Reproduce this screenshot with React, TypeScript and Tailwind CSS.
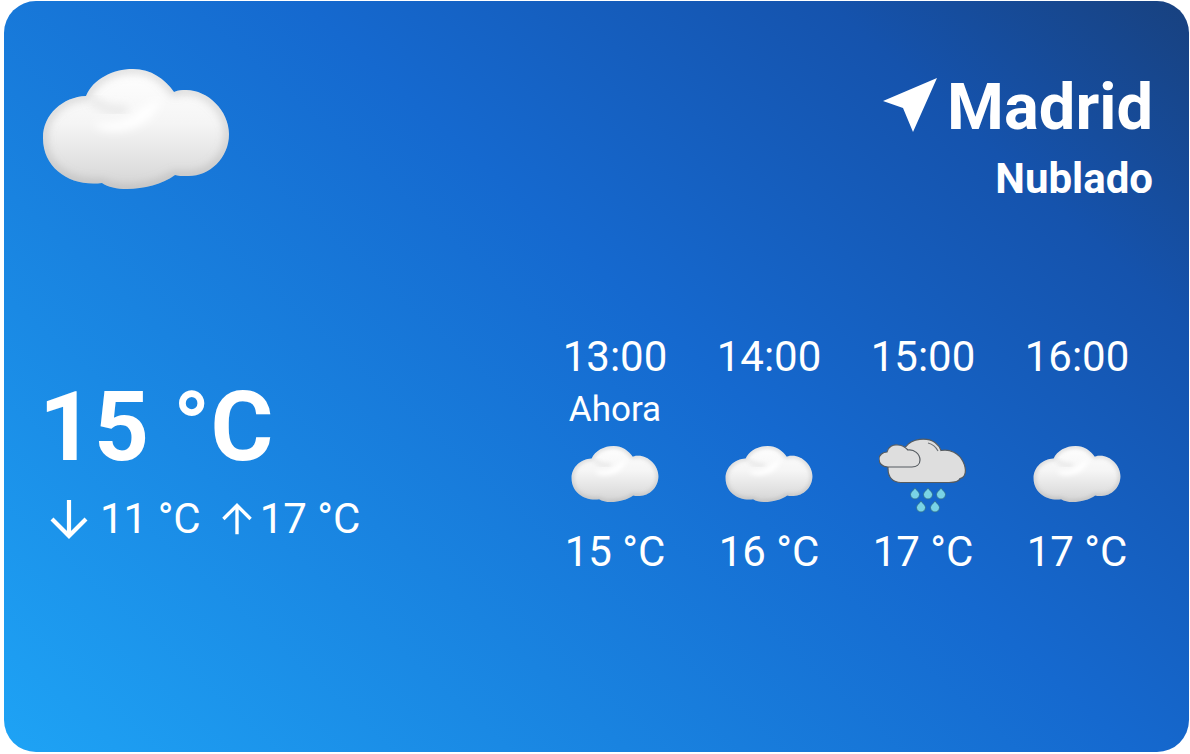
import { useId } from "react";

const CLOUD_PATH =
  "M43 27C50 10 70 0 90 0C108 0 122 10 131 23C136 21 139 21 143 21C165 21 186 42 186 65C186 90 165 108 144 107C139 107 135 107 132 106C120 115 100 120 84 120C74 120 65 118 59 114C28 118 0 100 0 69C0 45 20 28 43 27Z";

function Cloud({ className }: { className: string }) {
  const id = useId();
  return (
    <svg viewBox="0 0 186 120" className={className}>
      <defs>
        <linearGradient id={`${id}base`} x1="0" y1="0" x2="0" y2="1">
          <stop offset="0" stopColor="#ffffff" />
          <stop offset="0.45" stopColor="#f5f5f5" />
          <stop offset="0.75" stopColor="#e3e3e3" />
          <stop offset="1" stopColor="#d4d4d4" />
        </linearGradient>
        <filter id={`${id}blur`} x="-30%" y="-30%" width="160%" height="160%">
          <feGaussianBlur stdDeviation="4" />
        </filter>
        <filter id={`${id}edge`} x="-30%" y="-30%" width="160%" height="160%">
          <feGaussianBlur stdDeviation="5" />
        </filter>
        <clipPath id={`${id}clip`}>
          <path d={CLOUD_PATH} />
        </clipPath>
      </defs>
      <path d={CLOUD_PATH} fill={`url(#${id}base)`} />
      <g clipPath={`url(#${id}clip)`}>
        <path d={CLOUD_PATH} fill="none" stroke="#9c9c9c" strokeWidth="6" strokeOpacity="0.5" filter={`url(#${id}edge)`} />
        <path d="M48 30C58 38 72 44 84 40" fill="none" stroke="#cfcfcf" strokeWidth="9" strokeOpacity="0.35" filter={`url(#${id}blur)`} />
        <path d="M92 44C84 52 70 54 50 54C58 66 84 64 100 54C110 48 116 38 118 30C108 32 98 38 92 44Z" fill="#ffffff" filter={`url(#${id}blur)`} />
      </g>
    </svg>
  );
}

function RainCloud({ className }: { className: string }) {
  return (
    <svg viewBox="0 0 88 76" className={className}>
      <path
        d="M9 23C16 21 20 13 27 9C33 1 48 -0.5 56 5C60 8 61 10 62 13C71 11 80 16 84 24C88 32 87 40 81 41C80 44 74 45 70 45L22 45C14 45 9 40 9 31Z"
        fill="#dedede"
        stroke="#555b60"
        strokeWidth="1.2"
        transform="translate(0 0.5)"
      />
      <path d="M49 6C53 7 57 10 59 14" fill="none" stroke="#6d7276" strokeWidth="1.2" />
      <path
        d="M9 30C3 30 0 26 0 22C0 18 4 15 8 15C9 10 14 7 19 8C24 8 27 11 29 13C35 12 41 17 41 23C41 28 37 30 33 30Z"
        fill="#dedede"
        stroke="#555b60"
        strokeWidth="1.2"
      />
      {[
        [36, 51],
        [49, 51],
        [62, 51],
        [42, 64],
        [56, 64],
      ].map(([x, y]) => (
        <path
          key={`${x}-${y}`}
          d={`M${x} ${y}C${x + 2} ${y + 3} ${x + 4.5} ${y + 4} ${x + 4.5} ${y + 6.5}A4.5 4.5 0 0 1 ${x - 4.5} ${y + 6.5}C${x - 4.5} ${y + 4} ${x - 2} ${y + 3} ${x} ${y}Z`}
          fill="#79d3e6"
          stroke="#2f6d86"
          strokeWidth="0.8"
        />
      ))}
    </svg>
  );
}

function Arrow({ up, className }: { up?: boolean; className: string }) {
  return (
    <svg viewBox="0 0 40 40" className={className} fill="none" stroke="#fff" strokeWidth="4.2">
      {up ? <path d="M20 39V3M3 20L20 3L37 20" /> : <path d="M20 1V37M3 20L20 37L37 20" />}
    </svg>
  );
}

const hours = [
  { time: "13:00", label: "Ahora", temp: "15 °C", rain: false },
  { time: "14:00", label: "", temp: "16 °C", rain: false },
  { time: "15:00", label: "", temp: "17 °C", rain: true },
  { time: "16:00", label: "", temp: "17 °C", rain: false },
];

export default function App() {
  return (
    <div className="h-[754px] w-[1190px] bg-white pl-1 pt-px font-['Roboto',sans-serif] text-white">
      <div className="flex h-[751px] w-[1185px] flex-col rounded-[32px] bg-[linear-gradient(42deg,#1ea3f5,#1569cf_56%,#1553ad_82%,#18417f)] pl-[39px] pr-[35px] pt-[68px]">
        <div className="flex items-start justify-between">
          <Cloud className="h-[120px] w-[186px]" />
          <div className="mr-[1px] flex flex-col items-end">
            <div className="flex items-center gap-[10px]">
              <svg viewBox="0 0 54 54" className="-mt-[4px] h-[54px] w-[54px]">
                <path d="M54 0L30 54L20 30L0 23Z" fill="#fff" />
              </svg>
              <span className="text-[65px] font-bold leading-[76px]">Madrid</span>
            </div>
            <span className="mt-[9px] text-[42px] font-bold leading-[49px]">Nublado</span>
          </div>
        </div>

        <div className="mt-[129px] flex justify-between">
          <div className="pt-[39px]">
            <div className="-ml-[4px] text-[96px] font-bold leading-[112px]">15 °C</div>
            <div className="mt-[11px] flex items-center text-[42px] leading-[49px]">
              <Arrow className="ml-[6px] mr-[11px] h-[40px] w-[40px]" />
              <span>11 °C</span>
              <Arrow up className="ml-[20px] mr-[7px] h-[32px] w-[32px]" />
              <span>17 °C</span>
            </div>
          </div>

          <div className="grid w-[616px] grid-cols-4">
            {hours.map((h) => (
              <div key={h.time} className="flex flex-col items-center">
                <span className="text-[42px] leading-[49px]">{h.time}</span>
                <span className="mt-[8px] h-[41px] text-[35px] leading-[41px]">{h.label}</span>
                <div className="mt-[16px] flex h-[76px] items-start justify-center">
                  {h.rain ? (
                    <RainCloud className="-mt-[9px] h-[76px] w-[88px]" />
                  ) : (
                    <Cloud className="h-[56px] w-[88px]" />
                  )}
                </div>
                <span className="mt-[5px] text-[42px] leading-[49px]">{h.temp}</span>
              </div>
            ))}
          </div>
        </div>
      </div>
    </div>
  );
}
